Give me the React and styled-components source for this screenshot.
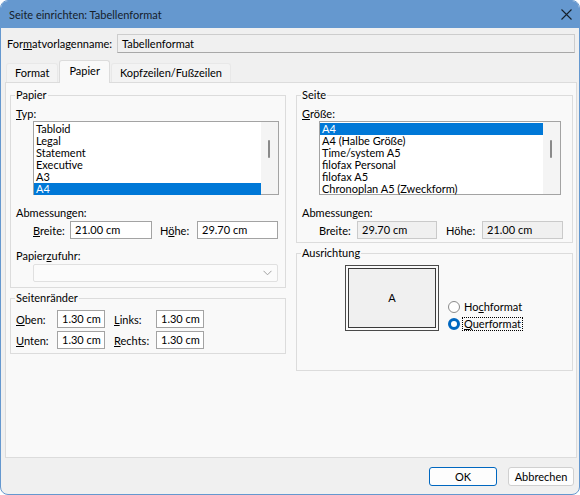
import styled, { createGlobalStyle } from "styled-components"

const GlobalStyle = createGlobalStyle`
  * { box-sizing: border-box; }
  body {
    margin: 0;
    background: #ffffff;
    font-family: Lato, "Noto Sans", sans-serif;
    font-size: 11px;
    color: #000;
  }
`

const Window = styled.div`
  width: 580px;
  height: 495px;
  display: flex;
  flex-direction: column;
  border: 1px solid #6598cf;
  border-radius: 8px;
  overflow: hidden;
  background: #f0f0f0;
`

const TitleBar = styled.div`
  height: 27px;
  flex: none;
  display: flex;
  align-items: center;
  justify-content: space-between;
  padding: 0 7px 0 8px;
  background: #6598cf;
  color: #15202b;
  font-size: 11px;
`

const NameRow = styled.div`
  display: flex;
  align-items: center;
  margin-top: 6px;
  padding: 0 4px 0 6px;
`

const NameLabel = styled.span`
  width: 110px;
  white-space: nowrap;
`

const ReadonlyField = styled.div`
  flex: 1;
  height: 19px;
  line-height: 17px;
  padding-left: 4px;
  border: 1px solid #cdcdcd;
  border-bottom-color: #a8a8a8;
  background: #f0f0f0;
`

const TabStrip = styled.div`
  display: flex;
  align-items: flex-end;
  gap: 1px;
  height: 22px;
  margin-top: 7px;
  padding-left: 5px;
  position: relative;
  z-index: 1;
`

const Tab = styled.div`
  height: ${p => (p.$active ? 23 : 19)}px;
  margin-bottom: ${p => (p.$active ? -1 : 0)}px;
  padding: 0 ${p => (p.$active ? 9 : 8)}px;
  line-height: ${p => (p.$active ? 19 : 18)}px;
  border: 1px solid ${p => (p.$active ? "#dcdcdc" : "#e8e8e8")};
  border-bottom: none;
  border-radius: 3px 3px 0 0;
  background: ${p => (p.$active ? "#f9f9f9" : "#f3f3f3")};
`

const Panel = styled.div`
  flex: 1;
  margin: 0 2px 0 4px;
  padding: 5px 0 0 4px;
  border: 1px solid #dcdcdc;
  background: #f9f9f9;
  display: grid;
  grid-template-columns: 276px 277px;
  column-gap: 10px;
  align-items: start;
`

const Column = styled.div`
  display: flex;
  flex-direction: column;
  gap: 3px;
`

const Group = styled.fieldset`
  margin: 0;
  min-width: 0;
  padding: 0 5px ${p => p.$bottom || 5}px 5px;
  border: 1px solid #dcdcdc;
  display: flex;
  flex-direction: column;
`

const Legend = styled.legend`
  margin-left: -1px;
  padding: 0 1px;
  line-height: 14px;
`

const FieldLabel = styled.div`
  line-height: 14px;
  margin-top: ${p => p.$top || 0}px;
`

const ListBox = styled.div`
  margin-left: 17px;
  width: ${p => p.$width}px;
  height: 74px;
  border: 1px solid #a3a3a3;
  background: #ffffff;
  display: flex;
`

const ListItems = styled.div`
  flex: 1;
  padding-top: 1px;
`

const ListItem = styled.div`
  height: 12px;
  line-height: 12px;
  padding-left: 2px;
  white-space: nowrap;
  background: ${p => (p.$selected ? "#0078d7" : "transparent")};
  color: ${p => (p.$selected ? "#ffffff" : "#000000")};
`

const ScrollTrack = styled.div`
  width: 17px;
  background: #f4f4f4;
  position: relative;
`

const ScrollThumb = styled.div`
  position: absolute;
  left: 7px;
  top: 18px;
  width: 2px;
  height: 18px;
  border-radius: 1px;
  background: #8a8a8a;
`

const FieldRow = styled.div`
  display: flex;
  align-items: center;
  margin-top: ${p => p.$top || 0}px;
  margin-left: ${p => p.$indent || 0}px;
`

const RowLabel = styled.span`
  width: ${p => p.$width}px;
  margin-left: ${p => p.$gap || 0}px;
`

const TextBox = styled.div`
  width: ${p => p.$width}px;
  height: 18px;
  line-height: 16px;
  padding-left: 4px;
  border: 1px solid ${p => (p.$readonly ? "#cacaca" : "#a3a3a3")};
  background: ${p => (p.$readonly ? "#f0f0f0" : "#ffffff")};
`

const Combo = styled.div`
  margin: 1px 0 0 17px;
  width: 245px;
  height: 18px;
  border: 1px solid #e0e0e0;
  border-radius: 2px;
  background: #fbfbfb;
  display: flex;
  align-items: center;
  justify-content: flex-end;
  padding-right: 5px;
`

const OrientRow = styled.div`
  display: flex;
  margin: 5px 0 0 43px;
`

const PagePreview = styled.div`
  width: 94px;
  height: 66px;
  padding: 2px;
  border: 1px solid #4a4a4a;
  background: #fafafa;
`

const PageInner = styled.div`
  height: 100%;
  border: 1px solid #3a3a3a;
  background: #f0f0f0;
  display: flex;
  align-items: center;
  justify-content: center;
  padding-bottom: 2px;
`

const RadioColumn = styled.div`
  align-self: flex-end;
  display: flex;
  flex-direction: column;
  gap: 3px;
  margin-left: 9px;
`

const RadioRow = styled.div`
  display: flex;
  align-items: center;
  height: 14px;
`

const RadioDot = styled.span`
  width: 12px;
  height: 12px;
  border-radius: 50%;
  background: #ffffff;
  border: ${p => (p.$checked ? "3.5px solid #0067c0" : "1px solid #8a8a8a")};
  margin-right: 2px;
`

const RadioLabel = styled.span`
  line-height: 12px;
  padding: 0 1px;
  border: 1px dotted ${p => (p.$focus ? "#000" : "transparent")};
`

const Footer = styled.div`
  height: 36px;
  flex: none;
  display: flex;
  justify-content: flex-end;
  align-items: flex-start;
  gap: 11px;
  padding: 9px 5px 0 0;
`

const Button = styled.div`
  width: ${p => p.$width}px;
  height: 19px;
  line-height: 17px;
  text-align: center;
  border: 1px solid ${p => (p.$primary ? "#0067c0" : "#d0d0d0")};
  border-radius: 3px;
  background: #fdfdfd;
`

const paperTypes = ["Tabloid", "Legal", "Statement", "Executive", "A3", "A4"]
const pageSizes = [
  "A4",
  "A4 (Halbe Größe)",
  "Time/system A5",
  "filofax Personal",
  "filofax A5",
  "Chronoplan A5 (Zweckform)",
]

function CloseIcon() {
  return (
    <svg width="11" height="11" viewBox="0 0 11 11">
      <path d="M0.5 0.5 L10.5 10.5 M10.5 0.5 L0.5 10.5" stroke="#15202b" strokeWidth="1.1" />
    </svg>
  )
}

function Chevron() {
  return (
    <svg width="9" height="6" viewBox="0 0 9 6">
      <path d="M0.5 0.8 L4.5 4.8 L8.5 0.8" stroke="#a0a0a0" strokeWidth="1" fill="none" />
    </svg>
  )
}

function List({ items, selected, width }) {
  return (
    <ListBox $width={width}>
      <ListItems>
        {items.map(item => (
          <ListItem key={item} $selected={item === selected}>{item}</ListItem>
        ))}
      </ListItems>
      <ScrollTrack>
        <ScrollThumb />
      </ScrollTrack>
    </ListBox>
  )
}

function App() {
  return (
    <>
      <GlobalStyle />
      <Window>
        <TitleBar>
          <span>Seite einrichten: Tabellenformat</span>
          <CloseIcon />
        </TitleBar>

        <NameRow>
          <NameLabel>For<u>m</u>atvorlagenname:</NameLabel>
          <ReadonlyField>Tabellenformat</ReadonlyField>
        </NameRow>

        <TabStrip>
          <Tab>Format</Tab>
          <Tab $active>Papier</Tab>
          <Tab>Kopfzeilen/Fußzeilen</Tab>
        </TabStrip>

        <Panel>
          <Column>
            <Group $bottom={5}>
              <Legend>Papier</Legend>
              <FieldLabel $top={5}><u>T</u>yp:</FieldLabel>
              <List items={paperTypes} selected="A4" width={246} />
              <FieldLabel $top={11}>Abmessungen:</FieldLabel>
              <FieldRow $top={1} $indent={17}>
                <RowLabel $width={37}><u>B</u>reite:</RowLabel>
                <TextBox $width={82}>21.00 cm</TextBox>
                <RowLabel $width={37} $gap={8}>H<u>ö</u>he:</RowLabel>
                <TextBox $width={81}>29.70 cm</TextBox>
              </FieldRow>
              <FieldLabel $top={10}>Papier<u>z</u>ufuhr:</FieldLabel>
              <Combo>
                <Chevron />
              </Combo>
            </Group>

            <Group $bottom={4}>
              <Legend>Seitenränder</Legend>
              <FieldRow $top={5}>
                <RowLabel $width={41}><u>O</u>ben:</RowLabel>
                <TextBox $width={48}>1.30 cm</TextBox>
                <RowLabel $width={42} $gap={9}><u>L</u>inks:</RowLabel>
                <TextBox $width={48}>1.30 cm</TextBox>
              </FieldRow>
              <FieldRow $top={3}>
                <RowLabel $width={41}><u>U</u>nten:</RowLabel>
                <TextBox $width={48}>1.30 cm</TextBox>
                <RowLabel $width={42} $gap={9}><u>R</u>echts:</RowLabel>
                <TextBox $width={48}>1.30 cm</TextBox>
              </FieldRow>
            </Group>
          </Column>

          <Column>
            <Group $bottom={3}>
              <Legend>Seite</Legend>
              <FieldLabel $top={5}><u>G</u>röße:</FieldLabel>
              <List items={pageSizes} selected="A4" width={242} />
              <FieldLabel $top={11}>Abmessungen:</FieldLabel>
              <FieldRow $top={1} $indent={17}>
                <RowLabel $width={38}>Breite:</RowLabel>
                <TextBox $width={80} $readonly>29.70 cm</TextBox>
                <RowLabel $width={36} $gap={9}>Höhe:</RowLabel>
                <TextBox $width={81} $readonly>21.00 cm</TextBox>
              </FieldRow>
            </Group>

            <Group $bottom={39}>
              <Legend>Ausrichtung</Legend>
              <OrientRow>
                <PagePreview>
                  <PageInner>A</PageInner>
                </PagePreview>
                <RadioColumn>
                  <RadioRow>
                    <RadioDot />
                    <RadioLabel>Ho<u>c</u>hformat</RadioLabel>
                  </RadioRow>
                  <RadioRow>
                    <RadioDot $checked />
                    <RadioLabel $focus><u>Q</u>uerformat</RadioLabel>
                  </RadioRow>
                </RadioColumn>
              </OrientRow>
            </Group>
          </Column>
        </Panel>

        <Footer>
          <Button $primary $width={68}>OK</Button>
          <Button $width={66}>Abbrechen</Button>
        </Footer>
      </Window>
    </>
  )
}

export default App
